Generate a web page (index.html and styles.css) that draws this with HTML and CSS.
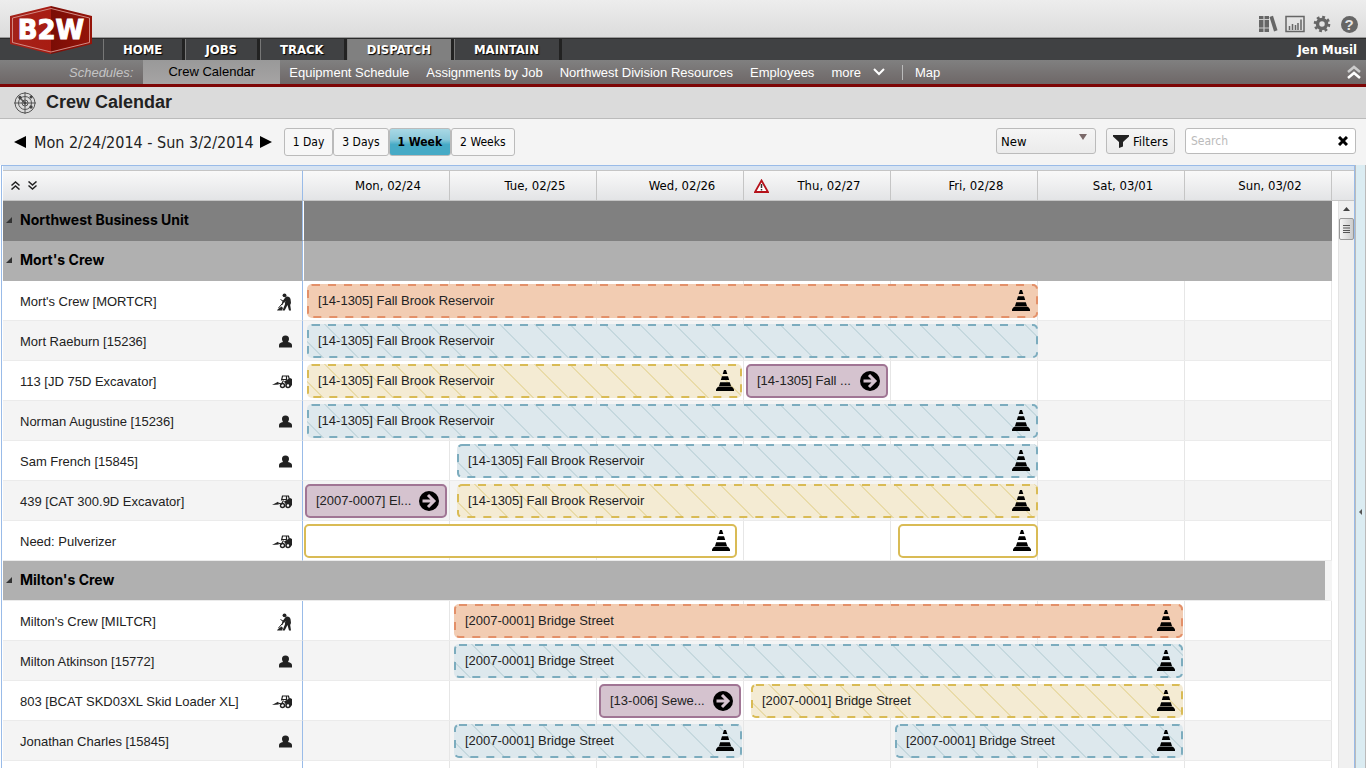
FILE: index.html
```
<!DOCTYPE html>
<html lang="en">
<head>
    <meta charset="UTF-8">
    <meta name="viewport" content="width=device-width, initial-scale=1.0">
    <title>Crew Calendar</title>
    <link rel="stylesheet" href="styles.css">
</head>
<body>
    <!-- shared icons -->
    <svg class="sprite" aria-hidden="true">
        <symbol id="cone" viewBox="0 0 18 21">
            <path d="M8 0h2l1.300 4H6.700z"/>
            <path d="M6 6.200h6L13.200 10H4.800z"/>
            <path d="M4.200 12.200h9.600L15 16H3z"/>
            <path d="M1.500 17.200L3 16.500h12l1.500.7L18 19.200V21H0v-1.800z"/>
        </symbol>
        <symbol id="arrow" viewBox="0 0 20 20">
            <circle cx="10" cy="10" r="10"/>
            <path d="M3.500 10h11M9 4l6 6-6 6" fill="none" stroke="#d5c3cf" stroke-width="3"/>
        </symbol>
        <symbol id="person" viewBox="0 0 20 18">
            <path d="M13.500 2.500a3.500 3.500 0 0 1 3.500 3.600c0 1.500-.8 2.300-1 3 2.600.5 4 1.400 4 3.300v2.100H7v-2.100c0-1.900 1.400-2.800 4-3.300-.2-.7-1-1.500-1-3a3.500 3.500 0 0 1 3.500-3.600z"/>
        </symbol>
        <symbol id="worker" viewBox="0 0 20 18">
            <circle cx="12.500" cy="2.300" r="1.900"/>
            <path d="M14 3.500c2.500-.5 4.300.8 4.600 3l.4 3.500-.8 2 .8 5.500h-2l-1.500-5.500-2.800 5.500h-2.200l2.400-6 .4-3.500-1.800 1.500-.6 2.300-1-.3.4-3z"/>
            <path d="M8.500 6.500l5 3M12.500 8l-6 7" fill="none" stroke="#222" stroke-width="1"/>
            <path d="M5 17.500l1-1.500 3.500-2.500 1.500 1.500-1 2.500z"/>
        </symbol>
        <symbol id="loader" viewBox="0 0 20 18">
            <path d="M0 12l6-3.200.8 2.700z"/>
            <path d="M6 10l3.500 1 2-3.500M9.500 7.500l1-4.500h6l1.500 6M10 6.500h4M14.500 3v4" fill="none" stroke="#222" stroke-width="1.200"/>
            <path d="M12 8.500l6-3.500 2 1v6l-1.500 2-2-4-3 1z"/>
            <circle cx="10.500" cy="12.500" r="2" fill="none" stroke="#222" stroke-width="1.400"/>
            <circle cx="16" cy="12.500" r="2" fill="#fff" stroke="#222" stroke-width="1.600"/>
        </symbol>
    </svg>

    <header class="top">
        <a class="logo" href="#">
            <svg width="84" height="49" viewBox="0 0 84 49">
                <defs>
                    <linearGradient id="red" x1="0" x2="1">
                        <stop offset="0" stop-color="#a3221a"/>
                        <stop offset=".5" stop-color="#a81c12"/>
                        <stop offset=".5" stop-color="#7a0d06"/>
                        <stop offset="1" stop-color="#951409"/>
                    </linearGradient>
                </defs>
                <path d="M42 0l41 10v28L42 48 1 38V10z" fill="url(#red)"/>
                <path d="M42 2.500l38.500 9.500v24.500L42 46 3.500 36.500V12z" fill="none" stroke="#d28a84"/>
                <text x="42" y="33" text-anchor="middle">B2W</text>
            </svg>
        </a>
        <div class="tools">
            <button aria-label="Library">
                <svg width="20" height="18" viewBox="0 0 20 18" fill="#666">
                    <path d="M1 1h4.500v16H1zM6.500 1H11v16H6.500z"/><path d="M11.500 2l3.500-1.300 4.500 14.500L16 16.500z"/>
                    <path d="M1 4.500h10M1 13h10" stroke="#ccc" fill="none"/>
                </svg>
            </button>
            <button aria-label="Reports">
                <svg width="20" height="18" viewBox="0 0 20 18">
                    <rect x="1" y="1.500" width="18" height="15" fill="none" stroke="#666" stroke-width="1.500"/>
                    <path d="M4.500 15v-4M7.500 15V9M10.500 15v-5M13 15V8M16 15V4.500" stroke="#666" stroke-width="1.500"/>
                </svg>
            </button>
            <button aria-label="Settings">
                <svg width="20" height="18" viewBox="0 0 20 18" fill="none" stroke="#666">
                    <circle cx="10" cy="9" r="4.500" stroke-width="3.500"/>
                    <circle cx="10" cy="9" r="6.800" stroke-width="3" stroke-dasharray="2.700 2.640"/>
                </svg>
            </button>
            <button aria-label="Help" class="help"><span>?</span></button>
        </div>
    </header>

    <nav class="main-nav">
        <a href="#">HOME</a>
        <a href="#">JOBS</a>
        <a href="#">TRACK</a>
        <a href="#" class="active">DISPATCH</a>
        <a href="#">MAINTAIN</a>
        <span class="user">Jen Musil</span>
    </nav>

    <nav class="sub-nav">
        <span class="caption">Schedules:</span>
        <a href="#" class="active">Crew Calendar</a>
        <a href="#">Equipment Schedule</a>
        <a href="#">Assignments by Job</a>
        <a href="#">Northwest Division Resources</a>
        <a href="#">Employees</a>
        <a href="#" class="more">more
            <svg width="12" height="8" viewBox="0 0 12 8"><path d="M1 1l5 5 5-5" fill="none" stroke="#fff" stroke-width="2"/></svg>
        </a>
        <a href="#" class="map">Map</a>
        <button class="collapse" aria-label="Collapse header">
            <svg width="14" height="14" viewBox="0 0 14 14" fill="none" stroke-width="2.500">
                <path d="M1 7l6-5 6 5" stroke="#ccc"/><path d="M1 13l6-5 6 5" stroke="#fff"/>
            </svg>
        </button>
    </nav>

    <div class="title-bar">
        <svg width="22" height="22" viewBox="0 0 22 22" fill="none" stroke="#555">
            <circle cx="11" cy="11" r="10"/><circle cx="11" cy="11" r="6.500"/><circle cx="11" cy="11" r="3"/>
            <path d="M11 0v22M0 11h22"/>
            <path d="M11 11L6 6" stroke-width="1.500"/>
            <g fill="#444" stroke="none"><circle cx="6" cy="5.500" r="1.700"/><circle cx="17" cy="5" r="1.500"/><circle cx="17" cy="15" r="1.700"/><circle cx="11" cy="11" r="1.500"/></g>
        </svg>
        <h1>Crew Calendar</h1>
    </div>

    <div class="toolbar">
        <button class="step" aria-label="Previous week"><svg width="12" height="12" viewBox="0 0 12 12"><path d="M12 0v12L0 6z"/></svg></button>
        <span class="range">Mon 2/24/2014 - Sun 3/2/2014</span>
        <button class="step" aria-label="Next week"><svg width="12" height="12" viewBox="0 0 12 12"><path d="M0 0v12l12-6z"/></svg></button>
        <div class="views">
            <button>1 Day</button>
            <button>3 Days</button>
            <button class="active">1 Week</button>
            <button>2 Weeks</button>
        </div>
        <div class="actions">
            <div class="new-box">
                <select aria-label="New"><option>New</option></select>
            </div>
            <button class="filters">
                <svg width="16" height="13" viewBox="0 0 16 13"><path d="M0 0h16v1.500L10 7v4.500L6 13V7L0 1.500z" fill="#222"/></svg>
                Filters
            </button>
            <div class="search">
                <input type="text" placeholder="Search" aria-label="Search">
                <button aria-label="Clear search"><svg width="10" height="10" viewBox="0 0 10 10"><path d="M1 1l8 8M9 1L1 9" stroke="#000" stroke-width="3"/></svg></button>
            </div>
        </div>
    </div>

    <main class="scheduler">
        <div class="calendar">
            <table>
                <colgroup><col class="name-col"><col span="7"></colgroup>
                <thead>
                    <tr>
                        <th class="expand">
                            <button aria-label="Collapse all"><svg width="9" height="9" viewBox="0 0 9 9"><path d="M.5 4.500l4-3.500 4 3.500M.5 8.500l4-3.500 4 3.500"/></svg></button>
                            <button aria-label="Expand all"><svg width="9" height="9" viewBox="0 0 9 9"><path d="M.5.5l4 3.500 4-3.500M.5 4.500l4 3.500 4-3.500"/></svg></button>
                        </th>
                        <th>Mon, 02/24</th>
                        <th>Tue, 02/25</th>
                        <th>Wed, 02/26</th>
                        <th class="warned">
                            <svg width="15" height="14" viewBox="0 0 15 14"><path d="M7.500 1.500L14 13H1z" fill="#fff" stroke="#b5121b" stroke-width="1.800"/><path d="M7.500 5v4M7.500 10v1.500" stroke="#333" stroke-width="1.500"/></svg>
                            Thu, 02/27
                        </th>
                        <th>Fri, 02/28</th>
                        <th>Sat, 03/01</th>
                        <th>Sun, 03/02</th>
                    </tr>
                </thead>
                <tbody>
                    <tr class="unit"><th scope="row"><span>Northwest Business Unit</span></th><td colspan="7"></td></tr>
                    <tr class="crew"><th scope="row"><span>Mort's Crew</span></th><td colspan="7"></td></tr>
                    <tr>
                        <th scope="row"><div class="name">Mort's Crew [MORTCR]<svg><use href="#worker"/></svg></div></th>
                        <td colspan="7"><div class="track">
                            <div class="bar orange flush" style="--start: 1; --end: 6"><svg class="dash"><rect/></svg>[14-1305] Fall Brook Reservoir<svg class="cone"><use href="#cone"/></svg></div>
                        </div></td>
                    </tr>
                    <tr>
                        <th scope="row"><div class="name">Mort Raeburn [15236]<svg><use href="#person"/></svg></div></th>
                        <td colspan="7"><div class="track">
                            <div class="bar blue flush" style="--start: 1; --end: 6"><svg class="dash"><rect/></svg>[14-1305] Fall Brook Reservoir</div>
                        </div></td>
                    </tr>
                    <tr>
                        <th scope="row"><div class="name">113 [JD 75D Excavator]<svg><use href="#loader"/></svg></div></th>
                        <td colspan="7"><div class="track">
                            <div class="bar yellow" style="--start: 1; --end: 4"><svg class="dash"><rect/></svg>[14-1305] Fall Brook Reservoir<svg class="cone"><use href="#cone"/></svg></div>
                            <div class="bar purple" style="--start: 4; --end: 5">[14-1305] Fall ...<svg class="arrow"><use href="#arrow"/></svg></div>
                        </div></td>
                    </tr>
                    <tr>
                        <th scope="row"><div class="name">Norman Augustine [15236]<svg><use href="#person"/></svg></div></th>
                        <td colspan="7"><div class="track">
                            <div class="bar blue flush" style="--start: 1; --end: 6"><svg class="dash"><rect/></svg>[14-1305] Fall Brook Reservoir<svg class="cone"><use href="#cone"/></svg></div>
                        </div></td>
                    </tr>
                    <tr>
                        <th scope="row"><div class="name">Sam French [15845]<svg><use href="#person"/></svg></div></th>
                        <td colspan="7"><div class="track">
                            <div class="bar blue flush late" style="--start: 2; --end: 6"><svg class="dash"><rect/></svg>[14-1305] Fall Brook Reservoir<svg class="cone"><use href="#cone"/></svg></div>
                        </div></td>
                    </tr>
                    <tr>
                        <th scope="row"><div class="name">439 [CAT 300.9D Excavator]<svg><use href="#loader"/></svg></div></th>
                        <td colspan="7"><div class="track">
                            <div class="bar purple" style="--start: 1; --end: 2">[2007-0007] El...<svg class="arrow"><use href="#arrow"/></svg></div>
                            <div class="bar yellow flush late" style="--start: 2; --end: 6"><svg class="dash"><rect/></svg>[14-1305] Fall Brook Reservoir<svg class="cone"><use href="#cone"/></svg></div>
                        </div></td>
                    </tr>
                    <tr>
                        <th scope="row"><div class="name">Need: Pulverizer<svg><use href="#loader"/></svg></div></th>
                        <td colspan="7"><div class="track">
                            <div class="bar need" style="--start: 1; --end: 4"><svg class="cone"><use href="#cone"/></svg></div>
                            <div class="bar need flush late" style="--start: 5; --end: 6"><svg class="cone"><use href="#cone"/></svg></div>
                        </div></td>
                    </tr>
                    <tr class="crew joined"><th scope="rowgroup" colspan="8"><span>Milton's Crew</span></th></tr>
                    <tr>
                        <th scope="row"><div class="name">Milton's Crew [MILTCR]<svg><use href="#worker"/></svg></div></th>
                        <td colspan="7"><div class="track">
                            <div class="bar orange" style="--start: 2; --end: 7"><svg class="dash"><rect/></svg>[2007-0001] Bridge Street<svg class="cone"><use href="#cone"/></svg></div>
                        </div></td>
                    </tr>
                    <tr>
                        <th scope="row"><div class="name">Milton Atkinson [15772]<svg><use href="#person"/></svg></div></th>
                        <td colspan="7"><div class="track">
                            <div class="bar blue" style="--start: 2; --end: 7"><svg class="dash"><rect/></svg>[2007-0001] Bridge Street<svg class="cone"><use href="#cone"/></svg></div>
                        </div></td>
                    </tr>
                    <tr>
                        <th scope="row"><div class="name">803 [BCAT SKD03XL Skid Loader XL]<svg><use href="#loader"/></svg></div></th>
                        <td colspan="7"><div class="track">
                            <div class="bar purple" style="--start: 3; --end: 4">[13-006] Sewe...<svg class="arrow"><use href="#arrow"/></svg></div>
                            <div class="bar yellow late" style="--start: 4; --end: 7"><svg class="dash"><rect/></svg>[2007-0001] Bridge Street<svg class="cone"><use href="#cone"/></svg></div>
                        </div></td>
                    </tr>
                    <tr>
                        <th scope="row"><div class="name">Jonathan Charles [15845]<svg><use href="#person"/></svg></div></th>
                        <td colspan="7"><div class="track">
                            <div class="bar blue" style="--start: 2; --end: 4"><svg class="dash"><rect/></svg>[2007-0001] Bridge Street<svg class="cone"><use href="#cone"/></svg></div>
                            <div class="bar blue" style="--start: 5; --end: 7"><svg class="dash"><rect/></svg>[2007-0001] Bridge Street<svg class="cone"><use href="#cone"/></svg></div>
                        </div></td>
                    </tr>
                    <tr><th></th><td colspan="7"><div class="track"></div></td></tr>
                </tbody>
            </table>
            <div class="scroll-col">
                <div class="scroll-head"></div>
                <div class="scrollbar">
                    <svg width="7" height="4" viewBox="0 0 7 4"><path d="M3.500 0L7 4H0z" fill="#444"/></svg>
                    <div class="thumb"><svg width="7" height="8" viewBox="0 0 7 8"><path d="M0 .5h7M0 3h7M0 5.500h7M0 7.500h7" stroke="#555"/></svg></div>
                </div>
            </div>
        </div>
        <button class="side-panel" aria-label="Open side panel">
            <svg width="3" height="6" viewBox="0 0 3 6"><path d="M3 0v6L0 3z" fill="#555"/></svg>
        </button>
    </main>
</body>
</html>
```
FILE: styles.css
```
* {
    margin: 0;
    padding: 0;
    box-sizing: border-box;
}
body {
    display: flex;
    flex-direction: column;
    height: 100vh;
    overflow: hidden;
    background: #fff;
    color: #222;
    font-family: "Liberation Sans", Arial, sans-serif;
    font-size: 13px;
}
a {
    color: inherit;
    text-decoration: none;
}
button {
    border: none;
    background: none;
    font: inherit;
    color: inherit;
    cursor: pointer;
}
svg {
    display: block;
    flex: none;
}
.sprite {
    position: absolute;
    width: 0;
    height: 0;
}

/* header */
.top {
    position: relative;
    flex: none;
    display: flex;
    justify-content: flex-end;
    height: 38px;
    background: linear-gradient(#ededed, #dcdcdc);
    border-bottom: 1px solid #999;
}
.logo {
    position: absolute;
    z-index: 2;
    top: 6px;
    left: 9px;
}
.logo text {
    font: bold 26px "DejaVu Sans", sans-serif;
    fill: #fff;
    stroke: #fff;
    stroke-width: 1px;
}
.tools {
    display: flex;
    gap: 7px;
    padding: 15px 7px 0 0;
}
.tools button {
    width: 20px;
    height: 18px;
}
.help span {
    display: block;
    width: 17px;
    height: 17px;
    margin: 0 auto;
    border-radius: 50%;
    background: #666;
    color: #e4e4e4;
    font-size: 15px;
    font-weight: bold;
    line-height: 17px;
}
.main-nav {
    flex: none;
    display: flex;
    height: 22px;
    padding: 0 9px 0 103px;
    background: #404143;
    border-top: 1px solid #2b2b2b;
    color: #fff;
    font: bold 13px/21px "DejaVu Sans Condensed", Tahoma, sans-serif;
}
.main-nav a {
    padding: 0 20px 0 19px;
    border-left: 1px solid #777;
    border-right: 3px solid #222;
    text-shadow: 1px 1px 1px #000;
}
.main-nav .active {
    background: #808080;
}
.user {
    margin-left: auto;
}
.sub-nav {
    flex: none;
    display: flex;
    align-items: center;
    gap: 17px;
    height: 27px;
    padding: 0 5px 0 69px;
    background: linear-gradient(#808080, #6e6767);
    border-bottom: 3px solid #7e0505;
    color: #fff;
}
.caption {
    margin-right: -7px;
    color: #c4c4c4;
    font-style: italic;
}
.sub-nav .active {
    width: 137px;
    height: 24px;
    margin-right: -8px;
    background: linear-gradient(#999, #a6a4a4);
    color: #000;
    line-height: 24px;
    text-align: center;
}
.more {
    display: flex;
    align-items: center;
    gap: 12px;
}
.map {
    padding-left: 12px;
    border-left: 1px solid #bbb;
}
.collapse {
    margin-left: auto;
}
.title-bar {
    flex: none;
    display: flex;
    align-items: center;
    gap: 10px;
    height: 32px;
    padding: 0 14px;
    background: #dbdbdb;
    border-bottom: 1px solid #bbb;
}
h1 {
    font-size: 18px;
}

/* toolbar */
.toolbar {
    flex: none;
    display: flex;
    align-items: center;
    height: 46px;
    padding: 0 10px 0 14px;
    background: #f4f4f4;
    font: 12px "DejaVu Sans Condensed", Tahoma, sans-serif;
    color: #000;
}
.range {
    margin: 0 6px 0 8px;
    color: #222;
    font-size: 16px;
}
.views {
    display: flex;
    margin-left: 12px;
}
.views button {
    height: 28px;
    padding: 0 8px;
    border: 1px solid #bbb;
    border-radius: 3px;
    background: #f7f7f7;
}
.views .active {
    background: linear-gradient(#a9d8e5, #8cc9da 40%, #46aac6 60%);
    font-weight: bold;
}
.actions {
    display: flex;
    gap: 10px;
    margin-left: auto;
    padding-bottom: 2px;
}
.new-box {
    position: relative;
}
.new-box::after {
    content: "";
    position: absolute;
    top: 6px;
    right: 9px;
    border: 4px solid transparent;
    border-top: 6px solid #7b6969;
    border-bottom: 0;
    pointer-events: none;
}
select,
.filters {
    height: 26px;
    border: 1px solid #bbb;
    border-radius: 3px;
    background: linear-gradient(#f5f5f5, #ebebeb);
    color: #000;
    font: 13px "DejaVu Sans Condensed", Tahoma, sans-serif;
}
select {
    width: 100px;
    padding-left: 4px;
    appearance: none;
}
.filters {
    display: flex;
    align-items: center;
    gap: 4px;
    padding: 0 6px;
}
.search {
    display: flex;
    align-items: center;
    width: 171px;
    height: 26px;
    padding: 0 7px 0 5px;
    border: 1px solid #bbb;
    border-radius: 3px;
    background: #fff;
}
.search input {
    flex: 1;
    min-width: 0;
    border: none;
    outline: none;
    font: inherit;
}
.search input::placeholder {
    color: #bbb;
}

/* scheduler */
.scheduler {
    flex: 1;
    display: flex;
    min-height: 0;
    overflow: hidden;
}
.calendar {
    flex: 1;
    display: flex;
    align-items: flex-start;
    min-width: 0;
    margin-left: 1px;
    padding-left: 1px;
    border: 1px solid #99bbe8;
    border-bottom: none;
    background: #fff;
}
table {
    flex: 1;
    min-width: 0;
    width: 100%;
    border-top: 4px solid #d6e3f2;
    border-spacing: 0;
    table-layout: fixed;
}
.name-col {
    width: 300px;
}
th {
    font-weight: normal;
    text-align: left;
}
thead th,
.scroll-head {
    height: 31px;
    border-top: 1px solid #c5c5c5;
    border-bottom: 1px solid #c5c5c5;
    background: linear-gradient(#f9f9f9, #e3e4e6);
}
thead th {
    position: relative;
    padding-left: 24px;
    border-right: 1px solid #c5c5c5;
    color: #000;
    font: 13px "DejaVu Sans Condensed", Tahoma, sans-serif;
    text-align: center;
}
thead .expand {
    padding-left: 8px;
    border-right-color: #99bbe8;
    text-align: left;
}
.expand button {
    display: inline-block;
    margin-right: 4px;
}
.expand path {
    fill: none;
    stroke: #222;
    stroke-width: 1.5;
}
.warned svg {
    position: absolute;
    top: 8px;
    left: 10px;
}
tbody th,
tbody td {
    height: 40px;
    border-bottom: 1px solid #ebebeb;
}
tbody tr:nth-child(even) {
    background: #f4f4f4;
}
tbody th {
    border-right: 1px solid #99bbe8;
}
tbody .unit th,
tbody .unit td {
    background: #808080;
    border-bottom-color: #808080;
}
tbody .crew th,
tbody .crew td {
    background: #b0b0b0;
    border-bottom-color: #b0b0b0;
}
.unit td,
.crew td {
    border-left: 1px solid #fff;
}
.unit th,
.crew th {
    padding-bottom: 2px;
    color: #000;
    font: bold 14px Inter, sans-serif;
}
.unit span,
.crew span {
    display: flex;
    align-items: center;
    gap: 8px;
    padding-left: 3px;
}
.unit span::before,
.crew span::before {
    content: "";
    border-left: 6px solid transparent;
    border-bottom: 6px solid #333;
}
tbody .joined th {
    border-right: 7px solid #f4f4f4;
    border-bottom-color: #ebebeb;
}
.name {
    display: flex;
    align-items: center;
    justify-content: space-between;
    padding: 2px 10px 0 17px;
}
.name svg {
    width: 20px;
    height: 18px;
    fill: #222;
}
.track {
    display: grid;
    grid-template-columns: repeat(7, minmax(0, 1fr));
    align-items: center;
    height: 39px;
    background: linear-gradient(to right, transparent calc(100% - 1px), #e6e6e6 0) 0 0 / calc(100% / 7) 100%;
}
.bar {
    position: relative;
    grid-row: 1;
    grid-column: var(--start) / var(--end);
    display: flex;
    align-items: center;
    height: 34px;
    margin: 0 2px 0 4px;
    padding: 0 8px 0 11px;
    border-radius: 5px;
    overflow: hidden;
    white-space: nowrap;
}
.dash {
    position: absolute;
    top: 0;
    left: 0;
    width: 100%;
    height: 100%;
}
.dash rect {
    width: 100%;
    height: 100%;
    rx: 5px;
    fill: none;
    stroke: var(--edge);
    stroke-width: 4px;
    stroke-dasharray: 8 8;
}
.orange {
    --edge: #e39069;
    background: #f2ccb2;
}
/* hatching drawn on a small tile so the lines stay even along the whole bar */
.blue,
.yellow {
    background-image: linear-gradient(45deg, transparent 24%, var(--hatch) 24% 27%, transparent 27% 74%, var(--hatch) 74% 77%, transparent 77%);
    background-size: 35px 35px;
}
.blue {
    --edge: #7cacbe;
    --hatch: #c5d8de;
    background-color: #dde8ed;
}
.yellow {
    --edge: #d9bb55;
    --hatch: #e9dba8;
    background-color: #f4ebd3;
}
.purple {
    border: 2px solid #a07594;
    background: #d5c3cf;
    padding: 0 6px 0 9px;
    margin: 0 3px 0 2px;
}
.need {
    border: 2px solid #d9bb55;
    background: #fff;
    padding-right: 5px;
    margin: 0 7px 0 1px;
}
.late {
    margin-left: 7px;
}
.flush {
    margin-right: 0;
}
.cone {
    width: 18px;
    height: 21px;
    margin-left: auto;
}
.arrow {
    width: 20px;
    height: 20px;
    margin-left: auto;
}
.scroll-col {
    flex: none;
    align-self: stretch;
    display: flex;
    flex-direction: column;
    width: 22px;
    border-top: 4px solid #d6e3f2;
}
.scroll-head {
    flex: none;
}
.scrollbar {
    flex: 1;
    display: flex;
    flex-direction: column;
    align-items: center;
    gap: 7px;
    margin-left: 6px;
    padding-top: 6px;
    border-left: 1px solid #e3e3e3;
    background: #f0f0f0;
}
.thumb {
    display: flex;
    align-items: center;
    justify-content: center;
    width: 15px;
    height: 22px;
    border: 1px solid #999;
    border-radius: 2px;
    background: linear-gradient(to right, #f5f5f5, #ccc);
}
.side-panel {
    flex: none;
    display: flex;
    align-items: center;
    justify-content: center;
    width: 11px;
    padding-top: 90px;
    background: #dbecf2;
    border-left: 1px solid #bbb;
    border-right: 1px solid #bbb;
}
```
